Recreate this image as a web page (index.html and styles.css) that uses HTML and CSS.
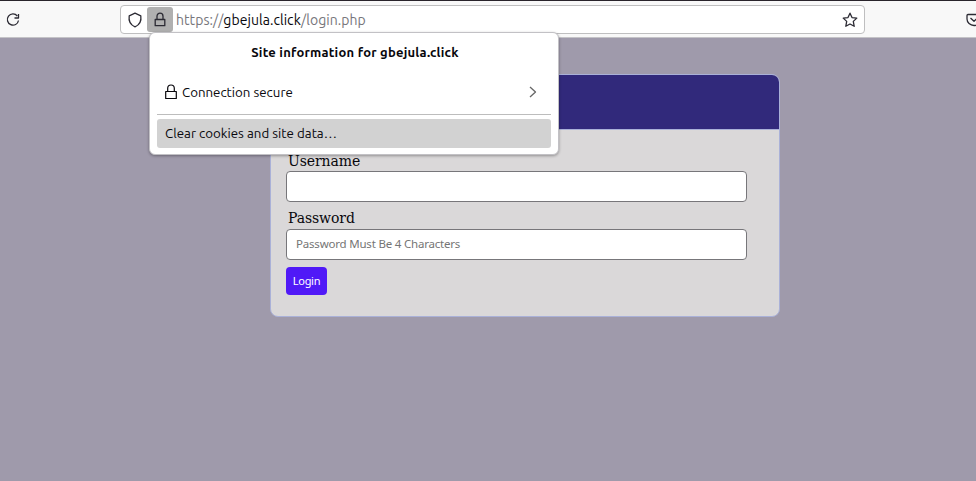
FILE: index.html
```html
<!DOCTYPE html>
<html lang="en">
<head>
<meta charset="utf-8">
<title>Login</title>
<link rel="stylesheet" href="styles.css">
</head>
<body>
<header class="toolbar">
  <svg class="reload" width="14" height="14" viewBox="0 0 14 14"><path d="M11.300 3A5.600 5.600 0 1 0 12.500 7.500M12.500 1v4h-4"/></svg>
  <div class="urlbar">
    <svg class="shield" width="16" height="16" viewBox="0 0 16 16"><path d="M8 1.200 2.200 3.800C1.500 8.500 3.200 12.700 8 14.800 12.800 12.700 14.500 8.500 13.800 3.800Z"/></svg>
    <span class="lock-button"><svg width="12" height="16" viewBox="0 0 12 16"><path d="M1.200 7.500h9.600v6.200h-9.600zM3 7.500V4.200a3 3 0 0 1 6 0v3.300"/></svg></span>
    <span class="url"><span>https://</span><b>gbejula.click</b><span>/login.php</span></span>
    <svg class="star" width="16" height="16" viewBox="0 0 16 16"><path d="m8 1.200 2 4.400 4.800.5-3.500 3.300.9 4.900L8 12l-4.200 2.300.9-4.900L1.200 6.100 6 5.600Z"/></svg>
  </div>
  <svg class="pocket" width="16" height="14" viewBox="0 0 16 14"><path d="M2 1.500h12q1 0 1 1V6a7 6.500 0 0 1-14 0V2.500q0-1 1-1ZM4.500 5 8 8.300 11.500 5"/></svg>
</header>
<main class="page">
  <section class="card">
    <div class="card-header"></div>
    <form class="card-body">
      <label for="user">Username</label>
      <input id="user" type="text">
      <label class="password-label" for="pass">Password</label>
      <input id="pass" type="password" placeholder="Password Must Be 4 Characters">
      <button type="button"><span>Login</span></button>
    </form>
  </section>
</main>
<aside class="popup">
  <h1><span>Site information for gbejula.click</span></h1>
  <div class="connection">
    <svg class="lock" width="12" height="16" viewBox="0 0 12 16"><path d="M.7 7.500h10.600v7h-10.600zM2.700 7.500V4.300a3.300 3.300 0 0 1 6.600 0v3.200"/></svg>
    <span class="connection-text">Connection secure</span>
    <svg class="chevron" width="8" height="12" viewBox="0 0 8 12"><path d="m1 1 5.500 5L1 11"/></svg>
  </div>
  <div class="clear"><span>Clear cookies and site data…</span></div>
</aside>
</body>
</html>
```
FILE: styles.css
```css
* { box-sizing: border-box; }
body {
  margin: 0;
  height: 481px;
  overflow: hidden;
  background: #9f9aab;
  color: #08070c;
  font-family: Ubuntu, "Noto Sans", sans-serif;
}
svg {
  flex: none;
  fill: none;
  stroke: #2b2a33;
  stroke-width: 1.3;
  stroke-linejoin: round;
}
.toolbar {
  display: flex;
  height: 38px;
  padding-top: 4px;
  border-top: 1px solid #29242b;
  border-bottom: 1px solid #c4c3c7;
  background: #f8f8f8;
}
.reload { margin: 8px 0 0 6px; }
.urlbar {
  display: flex;
  flex: none;
  align-items: center;
  width: 745px;
  height: 29px;
  margin-left: 100px;
  border: 1px solid #bfbfc0;
  border-radius: 4px;
  background: #fff;
}
.shield { margin-left: 6px; }
.lock-button {
  display: flex;
  align-items: center;
  justify-content: center;
  width: 26px;
  height: 25px;
  margin-left: 4px;
  border-radius: 3px;
  background: #b0b0b0;
}
.url {
  margin-left: 3px;
  color: #77767b;
  font-size: 14px;
  letter-spacing: 0.05px;
  line-height: 20px;
  white-space: nowrap;
}
.url b { color: #08070c; font-weight: 400; }
.star { margin: 0 6px 0 auto; }
.pocket { margin: 8px 0 0 101px; }
.card {
  width: 510px;
  height: 243px;
  margin: 36px 0 0 270px;
  overflow: hidden;
  border: 1px solid #aab1d8;
  border-radius: 8px;
  background: #dad8d9;
}
.card-header {
  height: 55px;
  border-bottom: 1px solid #aab1d8;
  background: #31297b;
}
.card-body {
  display: flex;
  flex-direction: column;
  align-items: flex-start;
  padding: 21px 0 0 15px;
}
.card-body label {
  height: 20px;
  margin-left: 2px;
  font: 14px/20px "DejaVu Serif", serif;
  letter-spacing: -0.1px;
}
.card-body .password-label {
  height: 21px;
  margin-top: 6px;
}
.card-body input {
  width: 461px;
  height: 31px;
  padding: 0 9px 2px;
  border: 1px solid #77767a;
  border-radius: 4px;
  background: #fff;
  font: 11.5px "Noto Sans", sans-serif;
  letter-spacing: -0.2px;
}
.card-body input::placeholder { color: #757575; opacity: 1; }
.card-body button {
  width: 41px;
  height: 28px;
  margin-top: 7px;
  padding: 0 0 2px;
  border: 0;
  border-radius: 4px;
  background: #5019f7;
  color: #fff;
  font: 11px "Noto Sans", sans-serif;
  letter-spacing: -0.3px;
}
.popup {
  position: absolute;
  top: 32px;
  left: 149px;
  width: 410px;
  height: 123px;
  padding: 0 7px;
  border: 1px solid #c2c1c5;
  border-radius: 6px;
  background: #fff;
  box-shadow: 0 1px 3px #0005;
  font-size: 13.3px;
}
.popup h1 {
  margin: 0;
  padding: 9px 0 0 2px;
  font-size: 13px;
  letter-spacing: 0.22px;
  line-height: 20px;
  text-align: center;
}
.connection {
  display: flex;
  align-items: center;
  height: 53px;
  padding: 8px 14px 0 8px;
  border-bottom: 1px solid #bdbdbd;
}
.lock { stroke: #08070c; stroke-width: 1.2; }
.connection-text {
  margin-left: 5px;
  padding-top: 2px;
  line-height: 20px;
}
.chevron { margin-left: auto; stroke: #666; }
.clear {
  height: 29px;
  margin-top: 4px;
  padding-left: 8px;
  border-radius: 3px;
  background: #d2d2d2;
  letter-spacing: 0.02px;
  line-height: 29px;
}
```
